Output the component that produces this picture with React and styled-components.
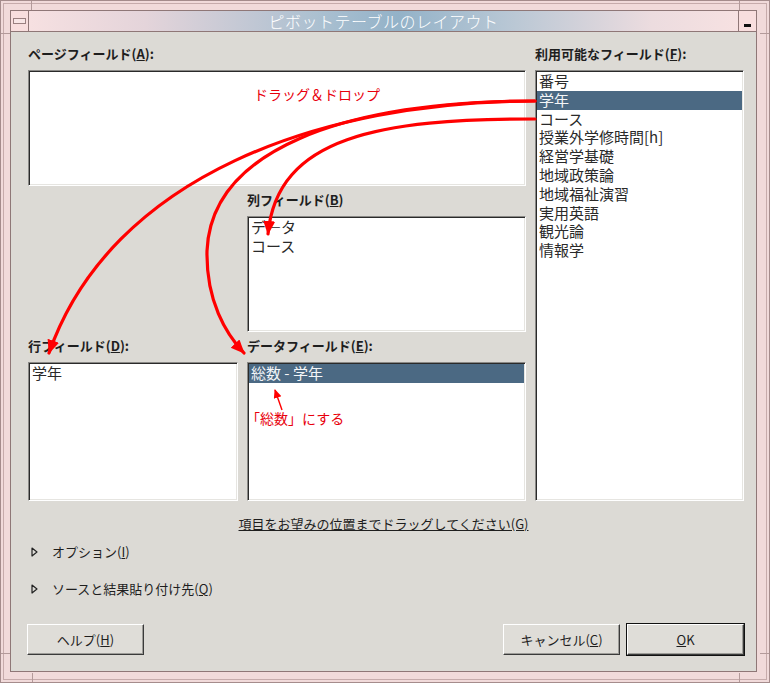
import styled, { createGlobalStyle } from 'styled-components';

const GlobalStyle = createGlobalStyle`
    html, body {
        margin: 0;
        padding: 0;
        background: #f0d8d8;
    }
    body {
        font-family: "Noto Sans CJK JP", "Noto Sans", sans-serif;
        color: #1e1e1e;
    }
`;

const Frame = styled.div`
    position: relative;
    box-sizing: border-box;
    width: 770px;
    height: 683px;
    padding: 9px 12px 10px 9px;
    background: #f1dada;
    border: 1px solid #a58c8c;
    box-shadow: inset 0 0 0 2px #f1dada, inset 0 0 0 3px #c6abab;
    display: flex;
    flex-direction: column;
`;

// resize-handle notches in the window border
const Notch = styled.span`
    position: absolute;
    background: #b39a9a;
    ${(p) =>
        p.$vertical
            ? `width: 1px; height: 9px; left: ${p.$x}px; ${p.$bottom ? 'bottom: 0' : 'top: 0'};`
            : `height: 1px; width: 9px; top: ${p.$y}px; ${p.$right ? 'right: 0' : 'left: 0'};`}
`;

const Inner = styled.div`
    flex: 1;
    display: flex;
    flex-direction: column;
    border: 1px solid #8f7777;
    min-height: 0;
`;

const TitleBar = styled.div`
    height: 20px;
    display: flex;
    align-items: stretch;
    background: linear-gradient(90deg, #f9e2e2 0%, #e4d4da 18%, #a9bfd0 42%, #93b2c8 52%, #b6c6d4 66%, #ecdcdf 86%, #f9e2e2 100%);
    border-bottom: 1px solid #8f7777;
`;

const TitleButton = styled.div`
    width: 18px;
    display: flex;
    align-items: ${(p) => (p.$min ? 'flex-end' : 'center')};
    justify-content: center;
    padding-bottom: ${(p) => (p.$min ? '4px' : '0')};
    box-sizing: border-box;
    background: #f8dede;
    border-${(p) => (p.$min ? 'left' : 'right')}: 1px solid #8f7777;
    > span {
        display: block;
        width: ${(p) => (p.$min ? '7px' : '11px')};
        height: ${(p) => (p.$min ? '3px' : '4px')};
        background: ${(p) => (p.$min ? '#111' : '#f8e6e6')};
        border: ${(p) => (p.$min ? 'none' : '1px solid #9a8080')};
    }
`;

const Title = styled.div`
    flex: 1;
    text-align: center;
    color: #ffffff;
    font-size: 16px;
    font-weight: 300;
    letter-spacing: 0.5px;
    line-height: 20px;
`;

const Body = styled.div`
    flex: 1;
    display: flex;
    flex-direction: column;
    background: #dcdad5;
    padding: 13px 14px 16px 17px;
`;

const MainGrid = styled.div`
    display: grid;
    grid-template-columns: 210px 279px 209px;
    grid-template-areas:
        'page page avail'
        '. col avail'
        'row data avail';
    column-gap: 9px;
    row-gap: 5px;
`;

const FieldGroup = styled.div`
    grid-area: ${(p) => p.$area};
    display: flex;
    flex-direction: column;
`;

const FieldLabel = styled.div`
    font-size: 13px;
    font-weight: 700;
    line-height: 18px;
    height: 18px;
    margin-bottom: 7px;
    white-space: nowrap;
`;

const ListBox = styled.div`
    box-sizing: border-box;
    height: ${(p) => (p.$height ? `${p.$height}px` : 'auto')};
    flex: ${(p) => (p.$height ? 'none' : '1')};
    background: #ffffff;
    border: 1px solid;
    border-color: #8a8986 #ffffff #ffffff #8a8986;
    box-shadow: inset 1px 1px 0 #2a2a2a, inset -1px -1px 0 #e6e5e1;
    padding: 1px;
`;

const ListItem = styled.div`
    font-size: 15px;
    line-height: 18.8px;
    height: 18.8px;
    padding-left: 2px;
    white-space: nowrap;
    color: ${(p) => (p.$selected ? '#f4f6f8' : '#2a2a2a')};
    background: ${(p) => (p.$selected ? '#4b6983' : 'transparent')};
`;

const Hint = styled.div`
    margin-top: 14px;
    text-align: center;
    font-size: 13px;
    line-height: 18px;
    text-decoration: underline;
    margin-left: -17px;
    margin-right: -14px;
`;

const Expander = styled.div`
    display: flex;
    align-items: center;
    gap: 14px;
    margin-top: ${(p) => p.$top}px;
    padding-left: 3px;
    font-size: 13px;
    line-height: 18px;
`;

const ButtonRow = styled.div`
    margin-top: auto;
    display: flex;
    margin-left: -1px;
    margin-right: -2px;
`;

const Button = styled.button`
    box-sizing: border-box;
    width: 117px;
    height: 31px;
    margin-left: ${(p) => (p.$push ? 'auto' : p.$gap ? `${p.$gap}px` : '0')};
    font-family: inherit;
    font-size: 13px;
    color: #1e1e1e;
    background: #dfddd8;
    border: 1px solid;
    border-color: #ffffff #3a3a3a #3a3a3a #ffffff;
    box-shadow: ${(p) =>
        p.$default ? '0 0 0 1px #111, inset -1px -1px 0 #9d9c98' : 'inset -1px -1px 0 #9d9c98'};
    padding: 0;
`;

const Overlay = styled.svg`
    position: absolute;
    left: 0;
    top: 0;
    width: 770px;
    height: 683px;
    pointer-events: none;
    overflow: visible;
    text {
        font-family: "Noto Sans CJK JP", sans-serif;
        font-size: 14px;
        fill: #e8000c;
    }
`;

const Triangle = () => (
    <svg width="7" height="10" viewBox="0 0 7 10">
        <path d="M1 1 L6 5 L1 9 Z" fill="none" stroke="#222" strokeWidth="1.2" strokeLinejoin="round" />
    </svg>
);

const AVAILABLE = [
    '番号',
    '学年',
    'コース',
    '授業外学修時間[h]',
    '経営学基礎',
    '地域政策論',
    '地域福祉演習',
    '実用英語',
    '観光論',
    '情報学'
];

const Annotations = () => (
    <Overlay viewBox="0 0 770 683">
        <defs>
            <marker id="head" markerUnits="userSpaceOnUse" markerWidth="16" markerHeight="14" refX="13" refY="6" orient="auto">
                <path d="M0,0 L14,6 L0,12 Z" fill="#ff0000" />
            </marker>
            <marker id="small" markerUnits="userSpaceOnUse" markerWidth="10" markerHeight="10" refX="8" refY="4" orient="auto">
                <path d="M0,0 L9,4 L0,8 Z" fill="#ff0000" />
            </marker>
        </defs>
        <g fill="none" stroke="#ff0000" strokeWidth="3.2" strokeLinecap="round">
            <path d="M534,100 C320,100 110,175 48,352" markerEnd="url(#head)" />
            <path d="M534,100 C340,100 210,150 206,250 C205,300 225,333 243,352" markerEnd="url(#head)" />
            <path d="M534,118 C380,118 276,135 267,233" markerEnd="url(#head)" />
        </g>
        <path d="M281,409 L274,389" stroke="#ff0000" strokeWidth="1.4" markerEnd="url(#small)" />
        <text x="253" y="99">ドラッグ＆ドロップ</text>
        <text x="245" y="423">「総数」にする</text>
    </Overlay>
);

export default function App() {
    return (
        <>
            <GlobalStyle />
            <Frame>
                <Notch $vertical $x={30} />
                <Notch $vertical $x={738} />
                <Notch $vertical $bottom $x={31} />
                <Notch $vertical $bottom $x={738} />
                <Notch $y={32} />
                <Notch $y={652} />
                <Notch $right $y={32} />
                <Notch $right $y={652} />
                <Inner>
                    <TitleBar>
                        <TitleButton>
                            <span />
                        </TitleButton>
                        <Title>ピボットテーブルのレイアウト</Title>
                        <TitleButton $min>
                            <span />
                        </TitleButton>
                    </TitleBar>
                    <Body>
                        <MainGrid>
                            <FieldGroup $area="page">
                                <FieldLabel>
                                    ページフィールド(<u>A</u>):
                                </FieldLabel>
                                <ListBox $height={116} />
                            </FieldGroup>
                            <FieldGroup $area="avail">
                                <FieldLabel>
                                    利用可能なフィールド(<u>F</u>):
                                </FieldLabel>
                                <ListBox>
                                    {AVAILABLE.map((name) => (
                                        <ListItem key={name} $selected={name === '学年'}>
                                            {name}
                                        </ListItem>
                                    ))}
                                </ListBox>
                            </FieldGroup>
                            <FieldGroup $area="col">
                                <FieldLabel>
                                    列フィールド(<u>B</u>)
                                </FieldLabel>
                                <ListBox $height={116}>
                                    <ListItem>デ―タ</ListItem>
                                    <ListItem>コース</ListItem>
                                </ListBox>
                            </FieldGroup>
                            <FieldGroup $area="row">
                                <FieldLabel>
                                    行フィールド(<u>D</u>):
                                </FieldLabel>
                                <ListBox $height={139}>
                                    <ListItem>学年</ListItem>
                                </ListBox>
                            </FieldGroup>
                            <FieldGroup $area="data">
                                <FieldLabel>
                                    データフィールド(<u>E</u>):
                                </FieldLabel>
                                <ListBox $height={139}>
                                    <ListItem $selected>総数 - 学年</ListItem>
                                </ListBox>
                            </FieldGroup>
                        </MainGrid>
                        <Hint>項目をお望みの位置までドラッグしてください(G)</Hint>
                        <Expander $top={10}>
                            <Triangle />
                            <span>
                                オプション(<u>I</u>)
                            </span>
                        </Expander>
                        <Expander $top={19}>
                            <Triangle />
                            <span>
                                ソースと結果貼り付け先(<u>Q</u>)
                            </span>
                        </Expander>
                        <ButtonRow>
                            <Button>
                                ヘルプ(<u>H</u>)
                            </Button>
                            <Button $push>
                                キャンセル(<u>C</u>)
                            </Button>
                            <Button $gap={7} $default>
                                <u>O</u>K
                            </Button>
                        </ButtonRow>
                    </Body>
                </Inner>
                <Annotations />
            </Frame>
        </>
    );
}
